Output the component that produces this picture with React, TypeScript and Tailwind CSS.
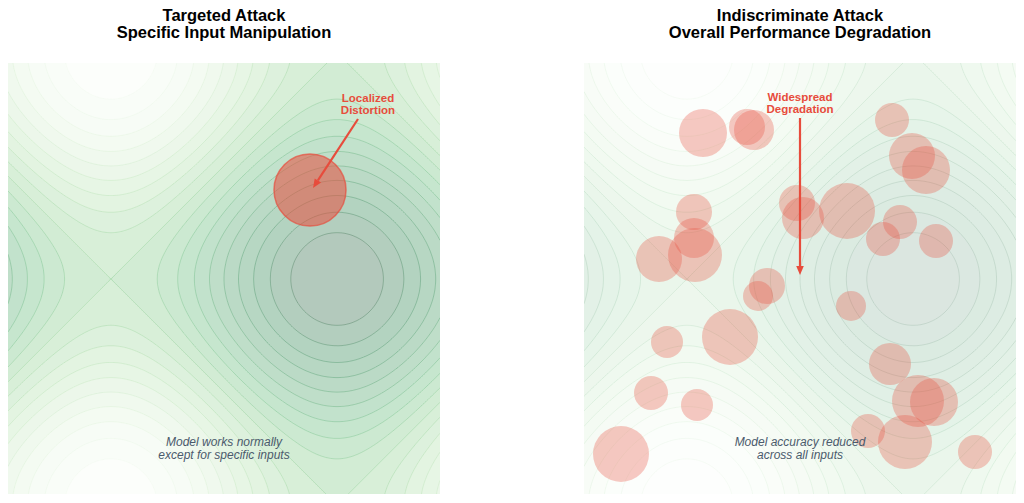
import { useMemo, type ReactNode } from 'react';

const SIZE = 432;
const RED = '#e74c3c';

// colorbrewer Greens, 9 stops
const GREENS = [
  [247, 252, 245], [229, 245, 224], [199, 233, 192], [161, 217, 155], [116, 196, 118],
  [65, 171, 93], [35, 139, 69], [0, 109, 44], [0, 68, 27],
];

function greens(t: number) {
  const p = Math.min(Math.max(t, 0), 1) * 8;
  const i = Math.min(Math.floor(p), 7);
  const f = p - i;
  return GREENS[i].map((c, k) => c + (GREENS[i + 1][k] - c) * f);
}

const overWhite = (c: number[], a: number) =>
  `rgb(${c.map(v => Math.round(255 * (1 - a) + v * a)).join(',')})`;

const surface = (x: number, y: number) => Math.sin(x) + Math.cos(y);
const unit = (p: number) => -3 + (p / SIZE) * 6;
const LEVELS = Array.from({ length: 21 }, (_, i) => -2 + i * 0.2);

function buildBands() {
  const d: string[] = Array(20).fill('');
  for (let py = 0; py < SIZE; py++) {
    const y = unit(py + 0.5);
    let cur = -1;
    let start = 0;
    for (let px = 0; px <= SIZE; px++) {
      let b = -2;
      if (px < SIZE) {
        const z = surface(unit(px + 0.5), y);
        b = Math.min(19, Math.max(0, Math.floor((z + 2) / 0.2 + 1e-9)));
      }
      if (b !== cur) {
        if (cur >= 0) d[cur] += `M${start} ${py}h${px - start}v1h${start - px}z`;
        cur = b;
        start = px;
      }
    }
  }
  return d;
}

// edges: 0 top, 1 right, 2 bottom, 3 left
const CASES = [[], [3, 2], [2, 1], [3, 1], [0, 1], [3, 0, 2, 1], [0, 2], [3, 0], [3, 0], [0, 2], [0, 1, 3, 2], [0, 1], [3, 1], [2, 1], [3, 2], []];

function buildLines(step = 2) {
  const n = SIZE / step;
  const g: number[][] = [];
  for (let j = 0; j <= n; j++) {
    const row: number[] = [];
    for (let i = 0; i <= n; i++) row.push(surface(unit(i * step), unit(j * step)));
    g.push(row);
  }
  return LEVELS.slice(1, -1).map(L => {
    let d = '';
    for (let j = 0; j < n; j++) {
      for (let i = 0; i < n; i++) {
        const a = g[j][i], b = g[j][i + 1], c = g[j + 1][i + 1], e = g[j + 1][i];
        const idx = (a > L ? 8 : 0) | (b > L ? 4 : 0) | (c > L ? 2 : 0) | (e > L ? 1 : 0);
        const segs = CASES[idx];
        if (!segs.length) continue;
        const x0 = i * step, y0 = j * step, x1 = x0 + step, y1 = y0 + step;
        const pt = (edge: number) => {
          if (edge === 0) return [x0 + ((L - a) / (b - a)) * step, y0];
          if (edge === 1) return [x1, y0 + ((L - b) / (c - b)) * step];
          if (edge === 2) return [x0 + ((L - e) / (c - e)) * step, y1];
          return [x0, y0 + ((L - a) / (e - a)) * step];
        };
        for (let s = 0; s < segs.length; s += 2) {
          const p = pt(segs[s]), q = pt(segs[s + 1]);
          d += `M${p[0].toFixed(1)} ${p[1].toFixed(1)}L${q[0].toFixed(1)} ${q[1].toFixed(1)}`;
        }
      }
    }
    return { level: L, d };
  });
}

function Arrow({ x1, y1, x2, y2 }: { x1: number; y1: number; x2: number; y2: number }) {
  const len = Math.hypot(x2 - x1, y2 - y1);
  const ux = (x2 - x1) / len, uy = (y2 - y1) / len;
  const hl = 9, hw = 3.8;
  const bx = x2 - ux * hl, by = y2 - uy * hl;
  return (
    <g>
      <line x1={x1} y1={y1} x2={bx} y2={by} stroke={RED} strokeWidth={2.2} />
      <polygon
        points={`${x2},${y2} ${bx - uy * hw},${by + ux * hw} ${bx + uy * hw},${by - ux * hw}`}
        fill={RED}
      />
    </g>
  );
}

function Plot({ fillAlpha, lineAlpha, lineTint, children }: { fillAlpha: number; lineAlpha: number; lineTint: number; children: ReactNode }) {
  const bands = useMemo(buildBands, []);
  const lines = useMemo(() => buildLines(2), []);
  return (
    <svg width={SIZE} height={431} viewBox="0 0 432 431" className="block">
      {bands.map((d, i) => (
        <path key={i} d={d} fill={overWhite(greens((i + 0.5) / 20), fillAlpha)} shapeRendering="crispEdges" />
      ))}
      {lines.map(l => (
        <path
          key={l.level}
          d={l.d}
          fill="none"
          stroke={overWhite(greens(Math.min(1, (l.level + 2) / 4 + lineTint)), 1)}
          strokeOpacity={lineAlpha}
          strokeWidth={0.7}
        />
      ))}
      {children}
    </svg>
  );
}

function Note({ lines, y }: { lines: string[]; y: number }) {
  return (
    <text x={216} textAnchor="middle" fontSize={12} fontStyle="italic" fill="#4b5a6c" fontFamily="'Liberation Sans', Arial, sans-serif">
      {lines.map((t, i) => (
        <tspan key={i} x={216} y={y + i * 13}>{t}</tspan>
      ))}
    </text>
  );
}

function Label({ lines, x, y }: { lines: string[]; x: number; y: number }) {
  return (
    <text x={x} textAnchor="middle" fontSize={11.5} fontWeight="bold" fill={RED} fontFamily="'Liberation Sans', Arial, sans-serif">
      {lines.map((t, i) => (
        <tspan key={i} x={x} y={y + i * 12.3}>{t}</tspan>
      ))}
    </text>
  );
}

const SPOTS: [number, number, number][] = [
  [119, 70, 24], [163, 64, 18], [170, 67, 20], [110, 149, 18], [110, 175, 20], [111, 192, 27],
  [75, 196, 23], [183, 223, 18], [174, 233, 15], [213, 140, 18], [219, 155, 21], [308, 57, 17],
  [328, 93, 23], [342, 107, 24], [263, 148, 28], [316, 159, 17], [299, 176, 17], [352, 178, 17],
  [146, 274, 28], [83, 279, 16], [67, 330, 17], [113, 342, 16], [37, 391, 28], [267, 243, 15],
  [306, 301, 21], [334, 338, 26], [350, 339, 24], [284, 368, 17], [321, 379, 27], [391, 389, 17],
];

function Column({ title, sub, children }: { title: string; sub: string; children: ReactNode }) {
  return (
    <div className="flex w-[432px] flex-col items-center">
      <div className="pt-[7px] text-center text-[16.5px] font-bold leading-[17px] text-black">
        <div>{title}</div>
        <div>{sub}</div>
      </div>
      <div className="mt-[22px]">{children}</div>
    </div>
  );
}

export default function App() {
  return (
    <div className="h-[503px] w-[1024px] overflow-hidden bg-white font-['Liberation_Sans',Arial,sans-serif]">
      <div className="flex gap-[144px] px-[8px]">
        <Column title="Targeted Attack" sub="Specific Input Manipulation">
          <Plot fillAlpha={0.3} lineAlpha={0.34} lineTint={0.05}>
            <circle cx={302} cy={127} r={36} fill={RED} fillOpacity={0.55} stroke={RED} strokeOpacity={0.7} strokeWidth={1.5} />
            <Arrow x1={350} y1={56} x2={305} y2={125} />
            <Label lines={['Localized', 'Distortion']} x={360} y={38.5} />
            <Note lines={['Model works normally', 'except for specific inputs']} y={383} />
          </Plot>
        </Column>
        <Column title="Indiscriminate Attack" sub="Overall Performance Degradation">
          <Plot fillAlpha={0.14} lineAlpha={0.15} lineTint={0.25}>
            {SPOTS.map(([cx, cy, r], i) => (
              <circle key={i} cx={cx} cy={cy} r={r} fill={RED} fillOpacity={0.3} />
            ))}
            <Arrow x1={216} y1={55} x2={216} y2={212} />
            <Label lines={['Widespread', 'Degradation']} x={216} y={37.8} />
            <Note lines={['Model accuracy reduced', 'across all inputs']} y={383} />
          </Plot>
        </Column>
      </div>
    </div>
  );
}
